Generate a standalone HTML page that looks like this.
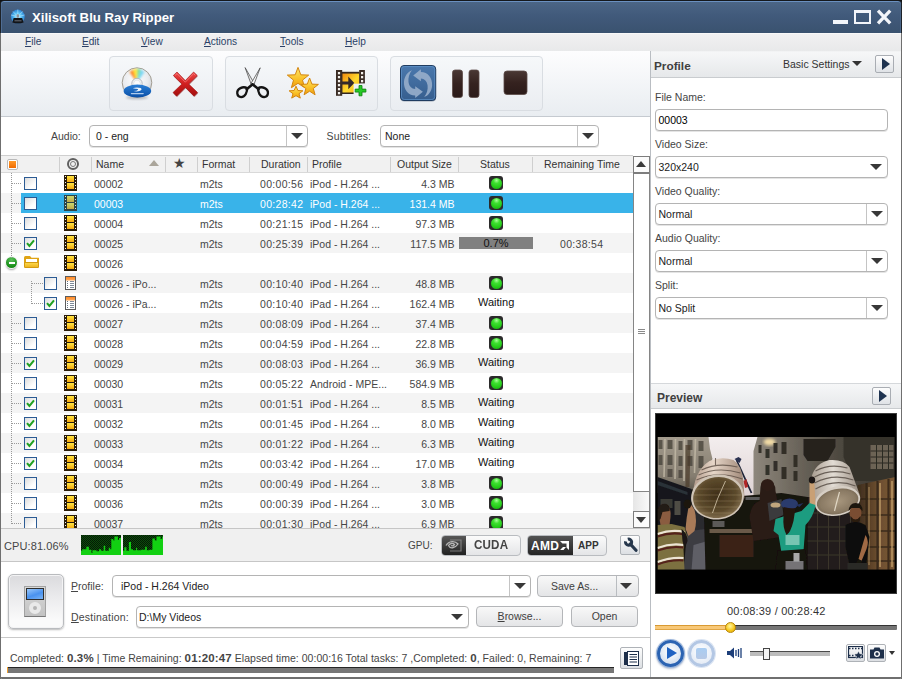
<!DOCTYPE html>
<html lang="en">
<head>
<meta charset="utf-8">
<title>Xilisoft Blu Ray Ripper</title>
<style>
*{box-sizing:border-box;margin:0;padding:0}
html,body{width:902px;height:679px;overflow:hidden;background:#fff}
body{font-family:"Liberation Sans","DejaVu Sans",sans-serif;font-size:10.5px;color:#3a3a3a;}
#win{position:relative;width:902px;height:679px;overflow:hidden;background:#fff}
.abs{position:absolute}
u{text-decoration:underline}
/* title */
#title{position:absolute;left:0;top:0;width:902px;height:33px;background:linear-gradient(#4c6686 0%,#415a7b 45%,#3a526f 100%);border-top:1px solid #15181c;border-left:1px solid #1d2228;border-right:1px solid #1d2228;border-radius:4px 4px 0 0;box-shadow:inset 0 1px 0 #6a90c0,inset 1px 0 0 #4f6d94,inset -1px 0 0 #4a6587}
#title .t{position:absolute;left:31px;top:8.8px;color:#fff;font-weight:bold;font-size:13.2px;letter-spacing:0px;white-space:nowrap}
/* menu */
#menu{position:absolute;left:0;top:33px;width:902px;height:18px;background:linear-gradient(#f1f1f2,#e8e9ea);border-left:1px solid #6f6f6f;border-right:1px solid #6f6f6f;box-shadow:inset 0 1px 0 #f8f8f8}
#menu span{position:absolute;top:3px;font-size:10.1px;color:#2b3f66;white-space:nowrap}
/* toolbar */
#tb{position:absolute;left:1px;top:51px;width:649px;height:66px;background:linear-gradient(#fdfdfe,#e9edf1);border-bottom:1px solid #c5cad0}
.grp{position:absolute;top:5px;height:55px;border:1px solid #d9dde2;border-radius:4px;background:linear-gradient(#f6f8fa,#eaedf1)}
/* audio row */
.lbl{position:absolute;white-space:nowrap;color:#454545}
.combo{position:absolute;height:22px;border:1px solid #b4b4b4;border-radius:4px;background:#fff;box-shadow:0 1px 0 #e4e4e4}
.combo .v{position:absolute;left:7px;top:4px;white-space:nowrap;color:#222}
.combo .a{position:absolute;right:0;top:0;width:21px;height:20px;border-left:1px solid #c4c4c4}
.combo .a:after,.tri:after{content:"";position:absolute;left:4px;top:7px;border:6px solid transparent;border-top:6.5px solid #383838;border-bottom:0}
.combo.ns .a{border-left:0}
/* table */
#th{position:absolute;left:1px;top:155px;width:632px;height:18px;background:#f1f1f1;border-top:1px solid #cfcfcf;border-bottom:1px solid #d9d9d9}
#th span{position:absolute;top:2px;white-space:nowrap;color:#333}
#th i{position:absolute;top:1px;width:1px;height:15px;background:#cfcfcf}
#list{position:absolute;left:1px;top:173px;width:632px;height:355px;overflow:hidden;background:#fff}
.row{position:absolute;left:0;width:632px;height:20px}
.row.alt{background:#f4f4f4}
.selbg{position:absolute;left:20px;top:0;width:612px;height:20px;background:#39b3e9}
.row.sel .c{color:#fff}
.c{position:absolute;top:4.5px;white-space:nowrap;color:#464646}
.nm{left:93px}.fm{left:199px}.du{left:259px;letter-spacing:.3px}.pr{left:309px}.sz{right:178.5px}.st{left:477px;top:3.2px;color:#111;font-size:11px}.rm{left:559px;letter-spacing:.3px}
.cb{position:absolute;top:4px;width:13px;height:13px;border:1px solid #2b5b94;background:linear-gradient(135deg,#dcdcdc,#fff 70%)}
.cb svg{position:absolute;left:-1px;top:-1px}
.hdot{position:absolute;top:10px;height:1px;background-image:linear-gradient(90deg,#999 50%,transparent 50%);background-size:2px 1px}
.vdot{position:absolute;width:1px;background-image:linear-gradient(#999 50%,transparent 50%);background-size:1px 2px}
.film{position:absolute;left:63px;top:2px;width:13px;height:15.5px;background:#2a1c08}
.film:before,.film:after{content:"";position:absolute;top:1px;width:1.4px;height:14px;background:repeating-linear-gradient(#f4f4f4 0 1.4px,transparent 1.4px 3px)}
.film:before{left:.9px}.film:after{left:10.8px}
.film i{position:absolute;left:3px;width:7px;height:6.2px;background:linear-gradient(#ffe640,#f5a60e)}
.film i:nth-child(1){top:1px}.film i:nth-child(2){top:8.2px}
.row.sel .film{opacity:.72}
.doc{position:absolute;left:64px;top:3px;width:11px;height:14px;border:1px solid #5c5c5c;background:linear-gradient(#ff8822,#ffac60) 0 0/100% 3.5px no-repeat,#fff}
.doc i{position:absolute;left:3.5px;top:4.3px;width:4.5px;height:7px;background:repeating-linear-gradient(#7f8b98 0 1px,transparent 1px 2px)}
.doc:before{content:"";position:absolute;left:1.3px;top:4.3px;width:1px;height:7px;background:repeating-linear-gradient(#66727f 0 1px,transparent 1px 2px)}
.led{position:absolute;left:488px;top:3px;width:14px;height:14px;border-radius:3px;background:#2b2b2b}
.led i{position:absolute;left:1.5px;top:1.5px;width:11px;height:11px;border-radius:5.5px;background:radial-gradient(circle at 50% 22%,#a8ff98 0,#3fe030 30%,#25cc1a 65%,#1aa012)}
.prog{position:absolute;left:458px;top:4px;width:74px;height:12px;background:#808080;color:#111;text-align:center;line-height:12.5px;font-size:11px}
.minus{position:absolute;left:5px;top:4px;width:11px;height:11px;border-radius:6px;background:radial-gradient(circle at 50% 25%,#58c058,#148a14 75%);box-shadow:0 0 0 1px #f4f4f4,0 2px 2px rgba(0,0,0,.35)}
.minus i{position:absolute;left:2.5px;top:4.5px;width:6px;height:2px;background:#fff}
.folder{position:absolute;left:23px;top:3px;width:15px;height:12px}
.folder:before{content:"";position:absolute;left:0;top:0;width:15px;height:12px;background:#dfa416;border-radius:1.5px;clip-path:polygon(0 0,40% 0,50% 15%,100% 15%,100% 100%,0 100%)}
.folder b{position:absolute;left:2px;top:3px;width:11px;height:3px;background:#fff}
.folder:after{content:"";position:absolute;left:0;top:5.5px;width:13px;height:4.5px;background:linear-gradient(#fbd648,#efb620);border:1px solid #d39a10;border-radius:0 0 1.5px 1.5px}
/* scrollbar */
#sb{position:absolute;left:633px;top:156px;width:17px;height:372px;background:#fff}
/* right panel */
#rp{position:absolute;left:650px;top:51px;width:251px;height:628px;background:#fff;border-left:1px solid #b9bdc2}
.ph{position:absolute;left:0;width:250px;height:26px;background:linear-gradient(#f6f7f8,#e6e8ea);border-bottom:1px solid #c9cccf;border-top:1px solid #d5d8db}
.ph b{position:absolute;left:3px;top:6.5px;font-size:12px;color:#404040}
.pbtn{position:absolute;width:19px;height:18px;border:1px solid #a9adb3;border-radius:2px;background:linear-gradient(#fdfdfd,#dfe2e6)}
.pbtn:after{content:"";position:absolute;left:6px;top:1.5px;border:6.5px solid transparent;border-left:8px solid #1f3350;border-right:0}
.btn{position:absolute;height:22px;border:1px solid #b4b6b9;border-radius:4px;background:linear-gradient(#f8f8f8,#e4e5e7);text-align:center;line-height:20px;color:#404040}
#stat b{font-size:11.5px;letter-spacing:.15px}
</style>
</head>
<body>
<div id="win">
<!-- title bar -->
<div class="abs" style="left:0;top:0;width:902px;height:6px;background:#111"></div>
<div id="title">
 <svg class="abs" style="left:8px;top:7px" width="18" height="18" viewBox="9 8 18 18"><defs><radialGradient id="dg" cx="0.5" cy="0.5" r="0.55"><stop offset="0" stop-color="#cfeeff"/><stop offset="0.45" stop-color="#5cc4f4"/><stop offset="1" stop-color="#2277cc"/></radialGradient></defs><circle cx="17.800" cy="16.600" r="7" fill="url(#dg)"/><path d="M17.800 16.600 L13 11.500 M17.800 16.600 L17.800 9.600 M17.800 16.600 L22.600 11.500 M17.800 16.600 L11 15 M17.800 16.600 L24.600 15" stroke="#bfe9ff" stroke-width=".8" opacity=".7"/><rect x="16.600" y="14.300" width="2.400" height="3.500" rx=".8" fill="#8d949c"/><path d="M13.600 18 H22.200 L23.600 22.400 Q18 24.600 12.400 22.400 Z" fill="#121418"/><path d="M14.500 20.800 H21.500" stroke="#7d858e" stroke-width=".8"/></svg>
 <span class="t">Xilisoft Blu Ray Ripper</span>
 <div class="abs" style="left:832px;top:19px;width:15px;height:4px;background:#f2f5fa"></div>
 <div class="abs" style="left:853px;top:9px;width:16.5px;height:14px;border:2px solid #f2f5fa;border-top-width:3px"></div>
 <svg class="abs" style="left:874px;top:8px" width="18" height="16" viewBox="0 0 18 16"><path d="M3 1.700 L15.200 14.300 M15.200 1.700 L3 14.300" stroke="#f2f5fa" stroke-width="3.300"/></svg>
</div>
<!-- menu -->
<div id="menu">
 <span style="left:24px"><u>F</u>ile</span>
 <span style="left:81px"><u>E</u>dit</span>
 <span style="left:140px"><u>V</u>iew</span>
 <span style="left:203px"><u>A</u>ctions</span>
 <span style="left:279px"><u>T</u>ools</span>
 <span style="left:344px"><u>H</u>elp</span>
</div>
<!-- toolbar -->
<div id="tb">
 <div class="grp" style="left:108px;width:104px"></div>
 <div class="grp" style="left:224px;width:153px"></div>
 <div class="grp" style="left:389px;width:153px"></div>
 <svg class="abs" style="left:0;top:0" width="649" height="66" viewBox="1 51 649 66">
  <defs>
   <radialGradient id="discg" cx="0.45" cy="0.4" r="0.7"><stop offset="0" stop-color="#ffffff"/><stop offset="0.6" stop-color="#e9ebee"/><stop offset="1" stop-color="#c3c7cc"/></radialGradient>
   <linearGradient id="blug" x1="0" y1="0" x2="0" y2="1"><stop offset="0" stop-color="#2a7fd6"/><stop offset="1" stop-color="#0b4fa6"/></linearGradient>
   <linearGradient id="redg" x1="0" y1="0" x2="0" y2="1"><stop offset="0" stop-color="#ef4a4a"/><stop offset="0.5" stop-color="#cf1f1f"/><stop offset="1" stop-color="#a30f0f"/></linearGradient>
   <linearGradient id="starg" x1="0" y1="0" x2="0" y2="1"><stop offset="0" stop-color="#ffe76a"/><stop offset="0.6" stop-color="#f9bf25"/><stop offset="1" stop-color="#ee9c12"/></linearGradient>
   <linearGradient id="filmg" x1="0" y1="0" x2="1" y2="1"><stop offset="0" stop-color="#f08a10"/><stop offset="0.55" stop-color="#ffd92e"/><stop offset="1" stop-color="#f6b21a"/></linearGradient>
   <linearGradient id="cvtg" x1="0" y1="0" x2="0" y2="1"><stop offset="0" stop-color="#4a78ad"/><stop offset="1" stop-color="#365e8e"/></linearGradient>
   <linearGradient id="drkg" x1="0" y1="0" x2="0" y2="1"><stop offset="0" stop-color="#4a3834"/><stop offset="0.5" stop-color="#35221f"/><stop offset="1" stop-color="#2b1b19"/></linearGradient>
   <linearGradient id="bladeg" x1="0" y1="0" x2="1" y2="0"><stop offset="0" stop-color="#8a8a8a"/><stop offset="0.5" stop-color="#f4f4f4"/><stop offset="1" stop-color="#7a7a7a"/></linearGradient>
   <clipPath id="discclip"><circle cx="137" cy="82.5" r="14.6"/></clipPath>
   <filter id="b1" x="-20%" y="-20%" width="140%" height="140%"><feGaussianBlur stdDeviation="1"/></filter>
   <filter id="b05" x="-20%" y="-20%" width="140%" height="140%"><feGaussianBlur stdDeviation="0.5"/></filter>
  </defs>
  <!-- disc -->
  <ellipse cx="137" cy="97.500" rx="11" ry="1.800" fill="#000" opacity=".22" filter="url(#b1)"/>
  <circle cx="137" cy="82.600" r="14.800" fill="url(#discg)" stroke="#9a9488" stroke-width="0.900"/>
  <g clip-path="url(#discclip)">
   <g filter="url(#b1)">
    <path d="M137 83 L129.500 72 L133.500 69.500 Z" fill="#ff8a2c"/>
    <path d="M137 83 L133 69.500 L137.500 68.500 Z" fill="#ffe63a"/>
    <path d="M137 83 L137 68.500 L141 69.500 Z" fill="#8be08a"/>
    <path d="M137 83 L140.500 69.500 L144.500 72 Z" fill="#7cd8f4"/>
   </g>
   <circle cx="137" cy="83.500" r="5.200" fill="#f2f4f6" stroke="#b4b8be" stroke-width="1"/>
   <circle cx="137" cy="83.500" r="3.400" fill="#fafbfc" stroke="#d4d8dc" stroke-width="0.600"/>
  </g>
  <ellipse cx="137.400" cy="91" rx="13.800" ry="6.500" fill="url(#blug)"/>
  <path d="M132.800 88.300 q4 -1.500 7.800 -0.200 q2.200 1.300 -0.500 2.700 q-3 1.100 -6.600 0.300 q3.800 -0.200 4.600 -1.400 q0.300 -1.100 -2.300 -1 z" fill="#fff" opacity=".92"/>
  <rect x="130.800" y="92.900" width="13" height="1.300" rx=".6" fill="#d5e6fa" opacity=".8"/>
  <!-- red X -->
  <g>
   <path d="M173.300 75.500 L177 72 L185.300 80.600 L193.600 72 L197.300 75.500 L188.700 84 L197.600 92.600 L194 96.200 L185.300 87.400 L176.600 96.200 L173 92.600 L181.900 84 Z" fill="#7f0b0b" opacity=".45" transform="translate(0.500,0.900)" filter="url(#b05)"/>
   <path d="M173.300 75.500 L177 72 L185.300 80.600 L193.600 72 L197.300 75.500 L188.700 84 L197.600 92.600 L194 96.200 L185.300 87.400 L176.600 96.200 L173 92.600 L181.900 84 Z" fill="url(#redg)" stroke="#a01414" stroke-width=".6" stroke-linejoin="round"/>
   <path d="M175.200 75.300 L177 73.600 L185.300 82.200 L193.600 73.600 L195.300 75.300" fill="none" stroke="#ff9a9a" stroke-width="1" opacity=".55"/>
  </g>
  <!-- scissors -->
  <g>
   <path d="M245.100 67.600 L254.300 83.600 L251.600 85.400 Z" fill="#ececec" stroke="#3c3c3c" stroke-width=".7" stroke-linejoin="round"/>
   <path d="M260.200 67.800 L253.600 85.400 L250.900 83.600 Z" fill="#f6f6f6" stroke="#3c3c3c" stroke-width=".7" stroke-linejoin="round"/>
   <path d="M252.800 84.400 L258.600 89.200" stroke="#141414" stroke-width="2.600" stroke-linecap="round"/>
   <path d="M252.400 84.400 L246.600 89.200" stroke="#141414" stroke-width="2.600" stroke-linecap="round"/>
   <path d="M258 88.300 C262 85.800 268.600 88.500 267.900 93.600 C267.200 98.200 261.500 98 259.400 94 C258.500 92.200 258 90 258 88.300 Z" fill="none" stroke="#141414" stroke-width="2.300"/>
   <path d="M247.200 88.300 C243.200 85.800 236.600 88.500 237.300 93.600 C238 98.200 243.700 98 245.800 94 C246.700 92.200 247.200 90 247.200 88.300 Z" fill="none" stroke="#141414" stroke-width="2.300"/>
  </g>
  <!-- stars -->
  <g stroke="#d4860f" stroke-width="1" stroke-linejoin="round" fill="url(#starg)">
   <path d="M296.0 86.2 L297.9 90.5 L302.9 90.8 L299.0 93.7 L300.3 98.1 L296.0 95.7 L291.7 98.1 L293.0 93.7 L289.1 90.8 L294.1 90.5Z"/>
   <path d="M298.0 67.4 L300.8 74.8 L308.7 75.1 L302.5 80.1 L304.6 87.7 L298.0 83.3 L291.4 87.7 L293.5 80.1 L287.3 75.1 L295.2 74.8Z"/>
   <path d="M309.6 78.0 L311.9 84.1 L318.4 84.4 L313.3 88.5 L315.1 94.8 L309.6 91.2 L304.1 94.8 L305.9 88.5 L300.8 84.4 L307.3 84.1Z"/>
  </g>
  <!-- film add -->
  <g>
   <rect x="342" y="71.800" width="17.500" height="22.200" fill="#33261f"/>
   <rect x="342.300" y="73.600" width="17" height="18.900" fill="url(#filmg)"/>
   <rect x="336" y="70" width="6.200" height="25.800" fill="#3a2c24"/>
   <rect x="359.200" y="70" width="5.700" height="13.600" fill="#3a2c24"/>
   <g fill="#f4f1ec"><rect x="337.900" y="72.0" width="2.200" height="2.300"/><rect x="337.900" y="76.0" width="2.200" height="2.300"/><rect x="337.900" y="80.0" width="2.200" height="2.300"/><rect x="337.900" y="84.0" width="2.200" height="2.300"/><rect x="337.900" y="88.0" width="2.200" height="2.300"/><rect x="337.900" y="92.0" width="2.200" height="2.300"/><rect x="361" y="72.0" width="2.200" height="2.300"/><rect x="361" y="76.0" width="2.200" height="2.300"/><rect x="361" y="80.0" width="2.200" height="2.300"/></g>
   <path d="M342 81.600 H348.300 V76.600 L354.300 82.900 L348.300 89.200 V84.500 H342 Z" fill="#33282a"/>
   <rect x="353.600" y="83.700" width="13" height="12.500" fill="#edf0f4"/>
   <path d="M359 85.500 h3 v3.600 h3.900 v3 h-3.900 v3.700 h-3 v-3.700 h-3.800 v-3 h3.800z" fill="#27c927" stroke="#0b7d0b" stroke-width=".8"/>
  </g>
  <!-- convert -->
  <rect x="400.300" y="65.800" width="35.800" height="35.600" rx="4" fill="#1a2f4c" opacity=".35" filter="url(#b05)"/>
  <rect x="400.500" y="65.500" width="35.200" height="35" rx="3.500" fill="url(#cvtg)" stroke="#203c60" stroke-width="1"/>
  <rect x="401.500" y="66.500" width="33.200" height="33" rx="2.800" fill="none" stroke="#5f93c9" stroke-width=".9" opacity=".8"/>
  <g fill="#93abc9" opacity=".95">
   <path d="M413.200 75.600 L420.900 69.300 V72 C428 72 432.500 78 432.100 85.500 C431.800 91 428.500 95.500 424.200 97.100 C427 93.500 428 89.500 427.600 85.500 C427 81 424.500 78.800 420.900 78.500 V81.200 Z"/>
   <path d="M413.200 75.600 L420.900 69.300 V72 C428 72 432.500 78 432.100 85.500 C431.800 91 428.500 95.500 424.200 97.100 C427 93.500 428 89.500 427.600 85.500 C427 81 424.500 78.800 420.900 78.500 V81.200 Z" transform="rotate(180 418.050 83.700)"/>
  </g>
  <!-- pause -->
  <rect x="452.5" y="70" width="10" height="27.500" rx="2.5" fill="url(#drkg)" stroke="#5c4a46" stroke-width="0.8"/>
  <rect x="469" y="70" width="10" height="27.500" rx="2.5" fill="url(#drkg)" stroke="#5c4a46" stroke-width="0.8"/>
  <!-- stop -->
  <rect x="504" y="71" width="23" height="23.500" rx="3" fill="url(#drkg)" stroke="#5c4a46" stroke-width="0.8"/>
 </svg>

</div>
<!-- left border -->
<div class="abs" style="left:0;top:33px;width:1px;height:646px;background:#6f6f6f"></div>
<div class="abs" style="left:901px;top:33px;width:1px;height:646px;background:#6f6f6f"></div>

<!-- audio row -->
<span class="lbl" style="left:51px;top:130px">Audio:</span>
<div class="combo" style="left:89px;top:125px;width:219px"><span class="v" style="left:6px">0 - eng</span><div class="a"></div></div>
<span class="lbl" style="left:326.5px;top:130px;letter-spacing:.15px">Subtitles:</span>
<div class="combo" style="left:380px;top:125px;width:219px"><span class="v" style="left:4px">None</span><div class="a"></div></div>
<!-- table header -->
<div id="th">
 <div class="abs" style="left:6px;top:3px;width:11px;height:11px;border:1px solid #b9b9b9;border-radius:2px;background:#fff"><div class="abs" style="left:1px;top:1px;width:7px;height:7px;background:linear-gradient(#ff9a2a,#f06a00)"></div></div>
 <i style="left:58px"></i><i style="left:90px"></i><i style="left:164px"></i><i style="left:196px"></i><i style="left:248px"></i><i style="left:306px"></i><i style="left:389px"></i><i style="left:457px"></i><i style="left:531px"></i>
 <div class="abs" style="left:66px;top:2px;width:12px;height:12px;border-radius:6px;border:2px solid #606060"><div class="abs" style="left:1px;top:1px;width:6px;height:6px;border-radius:3px;border:1.5px solid #777"></div></div>
 <span style="left:95px">Name</span>
 <div class="abs" style="left:148px;top:4px;border:5px solid transparent;border-bottom:6px solid #aaa59a;border-top:0"></div>
 <span style="left:172px;top:-1px;font-size:14px;color:#444">&#9733;</span>
 <span style="left:201px">Format</span>
 <span style="left:260px">Duration</span>
 <span style="left:311px">Profile</span>
 <span style="left:396px">Output Size</span>
 <span style="left:479px">Status</span>
 <span style="left:543px">Remaining Time</span>
</div>
<!-- list -->
<div id="list">
<div class="row" style="top:0px"><div class="hdot" style="left:11px;width:10px"></div><div class="cb" style="left:23px"></div><div class="film"><i></i><i></i></div><span class="c nm">00002</span><span class="c fm">m2ts</span><span class="c du">00:00:56</span><span class="c pr">iPod - H.264 ...</span><span class="c sz">4.3 MB</span><div class="led"><i></i></div></div>
<div class="row alt sel" style="top:20px"><div class="selbg"></div><div class="hdot" style="left:11px;width:10px"></div><div class="cb" style="left:23px"></div><div class="film"><i></i><i></i></div><span class="c nm">00003</span><span class="c fm">m2ts</span><span class="c du">00:28:42</span><span class="c pr">iPod - H.264 ...</span><span class="c sz">131.4 MB</span><div class="led"><i></i></div></div>
<div class="row" style="top:40px"><div class="hdot" style="left:11px;width:10px"></div><div class="cb" style="left:23px"></div><div class="film"><i></i><i></i></div><span class="c nm">00004</span><span class="c fm">m2ts</span><span class="c du">00:21:15</span><span class="c pr">iPod - H.264 ...</span><span class="c sz">97.3 MB</span><div class="led"><i></i></div></div>
<div class="row alt" style="top:60px"><div class="hdot" style="left:11px;width:10px"></div><div class="cb on" style="left:23px"><svg width="13" height="13" viewBox="0 0 13 13"><path d="M3 6.2 L5.4 9 L10 3.4" fill="none" stroke="#21a121" stroke-width="2"/></svg></div><div class="film"><i></i><i></i></div><span class="c nm">00025</span><span class="c fm">m2ts</span><span class="c du">00:25:39</span><span class="c pr">iPod - H.264 ...</span><span class="c sz">117.5 MB</span><div class="prog">0.7%</div><span class="c rm">00:38:54</span></div>
<div class="row" style="top:80px"><div class="minus"><i></i></div><div class="folder"><b></b></div><div class="film"><i></i><i></i></div><span class="c nm">00026</span></div>
<div class="row alt" style="top:100px"><div class="hdot" style="left:31px;width:14px"></div><div class="cb" style="left:43px"></div><div class="doc"><i></i></div><span class="c nm">00026 - iPo...</span><span class="c fm">m2ts</span><span class="c du">00:10:40</span><span class="c pr">iPod - H.264 ...</span><span class="c sz">48.8 MB</span><div class="led"><i></i></div></div>
<div class="row" style="top:120px"><div class="hdot" style="left:31px;width:14px"></div><div class="cb on" style="left:43px"><svg width="13" height="13" viewBox="0 0 13 13"><path d="M3 6.2 L5.4 9 L10 3.4" fill="none" stroke="#21a121" stroke-width="2"/></svg></div><div class="doc"><i></i></div><span class="c nm">00026 - iPa...</span><span class="c fm">m2ts</span><span class="c du">00:10:40</span><span class="c pr">iPad - H.264 ...</span><span class="c sz">162.4 MB</span><span class="c st">Waiting</span></div>
<div class="row alt" style="top:140px"><div class="hdot" style="left:11px;width:10px"></div><div class="cb" style="left:23px"></div><div class="film"><i></i><i></i></div><span class="c nm">00027</span><span class="c fm">m2ts</span><span class="c du">00:08:09</span><span class="c pr">iPod - H.264 ...</span><span class="c sz">37.4 MB</span><div class="led"><i></i></div></div>
<div class="row" style="top:160px"><div class="hdot" style="left:11px;width:10px"></div><div class="cb" style="left:23px"></div><div class="film"><i></i><i></i></div><span class="c nm">00028</span><span class="c fm">m2ts</span><span class="c du">00:04:59</span><span class="c pr">iPod - H.264 ...</span><span class="c sz">22.8 MB</span><div class="led"><i></i></div></div>
<div class="row alt" style="top:180px"><div class="hdot" style="left:11px;width:10px"></div><div class="cb on" style="left:23px"><svg width="13" height="13" viewBox="0 0 13 13"><path d="M3 6.2 L5.4 9 L10 3.4" fill="none" stroke="#21a121" stroke-width="2"/></svg></div><div class="film"><i></i><i></i></div><span class="c nm">00029</span><span class="c fm">m2ts</span><span class="c du">00:08:03</span><span class="c pr">iPod - H.264 ...</span><span class="c sz">36.9 MB</span><span class="c st">Waiting</span></div>
<div class="row" style="top:200px"><div class="hdot" style="left:11px;width:10px"></div><div class="cb" style="left:23px"></div><div class="film"><i></i><i></i></div><span class="c nm">00030</span><span class="c fm">m2ts</span><span class="c du">00:05:22</span><span class="c pr">Android - MPE...</span><span class="c sz">584.9 MB</span><div class="led"><i></i></div></div>
<div class="row alt" style="top:220px"><div class="hdot" style="left:11px;width:10px"></div><div class="cb on" style="left:23px"><svg width="13" height="13" viewBox="0 0 13 13"><path d="M3 6.2 L5.4 9 L10 3.4" fill="none" stroke="#21a121" stroke-width="2"/></svg></div><div class="film"><i></i><i></i></div><span class="c nm">00031</span><span class="c fm">m2ts</span><span class="c du">00:01:51</span><span class="c pr">iPod - H.264 ...</span><span class="c sz">8.5 MB</span><span class="c st">Waiting</span></div>
<div class="row" style="top:240px"><div class="hdot" style="left:11px;width:10px"></div><div class="cb on" style="left:23px"><svg width="13" height="13" viewBox="0 0 13 13"><path d="M3 6.2 L5.4 9 L10 3.4" fill="none" stroke="#21a121" stroke-width="2"/></svg></div><div class="film"><i></i><i></i></div><span class="c nm">00032</span><span class="c fm">m2ts</span><span class="c du">00:01:45</span><span class="c pr">iPod - H.264 ...</span><span class="c sz">8.0 MB</span><span class="c st">Waiting</span></div>
<div class="row alt" style="top:260px"><div class="hdot" style="left:11px;width:10px"></div><div class="cb on" style="left:23px"><svg width="13" height="13" viewBox="0 0 13 13"><path d="M3 6.2 L5.4 9 L10 3.4" fill="none" stroke="#21a121" stroke-width="2"/></svg></div><div class="film"><i></i><i></i></div><span class="c nm">00033</span><span class="c fm">m2ts</span><span class="c du">00:01:22</span><span class="c pr">iPod - H.264 ...</span><span class="c sz">6.3 MB</span><span class="c st">Waiting</span></div>
<div class="row" style="top:280px"><div class="hdot" style="left:11px;width:10px"></div><div class="cb on" style="left:23px"><svg width="13" height="13" viewBox="0 0 13 13"><path d="M3 6.2 L5.4 9 L10 3.4" fill="none" stroke="#21a121" stroke-width="2"/></svg></div><div class="film"><i></i><i></i></div><span class="c nm">00034</span><span class="c fm">m2ts</span><span class="c du">00:03:42</span><span class="c pr">iPod - H.264 ...</span><span class="c sz">17.0 MB</span><span class="c st">Waiting</span></div>
<div class="row alt" style="top:300px"><div class="hdot" style="left:11px;width:10px"></div><div class="cb" style="left:23px"></div><div class="film"><i></i><i></i></div><span class="c nm">00035</span><span class="c fm">m2ts</span><span class="c du">00:00:49</span><span class="c pr">iPod - H.264 ...</span><span class="c sz">3.8 MB</span><div class="led"><i></i></div></div>
<div class="row" style="top:320px"><div class="hdot" style="left:11px;width:10px"></div><div class="cb" style="left:23px"></div><div class="film"><i></i><i></i></div><span class="c nm">00036</span><span class="c fm">m2ts</span><span class="c du">00:00:39</span><span class="c pr">iPod - H.264 ...</span><span class="c sz">3.0 MB</span><div class="led"><i></i></div></div>
<div class="row alt" style="top:340px"><div class="hdot" style="left:11px;width:10px"></div><div class="cb" style="left:23px"></div><div class="film"><i></i><i></i></div><span class="c nm">00037</span><span class="c fm">m2ts</span><span class="c du">00:01:30</span><span class="c pr">iPod - H.264 ...</span><span class="c sz">6.9 MB</span><div class="led"><i></i></div></div>
 <div class="vdot" style="left:10px;top:0;height:86px"></div>
 <div class="vdot" style="left:10px;top:108px;height:243px"></div>
 <div class="vdot" style="left:30px;top:108px;height:23px"></div>
</div>
<!-- scrollbar -->
<div id="sb">
 <div class="abs" style="left:0;top:0;width:17px;height:18px;border:1px solid #7d7d7d;border-bottom-width:2px;background:#fbfbfb"></div>
 <div class="abs" style="left:3px;top:5px;border:5.5px solid transparent;border-bottom:6px solid #3a3a3a;border-top:0"></div>
 <div class="abs" style="left:0;top:18px;width:17px;height:318px;border-left:1px solid #858585;border-right:1px solid #858585;border-bottom:1px solid #858585;background:#fff"></div>
 <div class="abs" style="left:5px;top:173px;width:7px;height:1px;background:#8a8a8a;box-shadow:0 2px 0 #8a8a8a,0 4px 0 #8a8a8a"></div>
 <div class="abs" style="left:0;top:336px;width:17px;height:20px;border-right:1px solid #858585;background:linear-gradient(90deg,#e6e6e6,#f9f9f9)"></div>
 <div class="abs" style="left:0;top:355px;width:17px;height:17px;border:1px solid #7d7d7d;border-top-width:1px;background:#fbfbfb"></div>
 <div class="abs" style="left:3px;top:361px;border:5.5px solid transparent;border-top:6px solid #3a3a3a;border-bottom:0"></div>
</div>
<!-- cpu bar -->
<div class="abs" style="left:1px;top:528px;width:649px;height:34px;background:#f0f0f0;border-top:1px solid #c6c6c6;border-bottom:1px solid #c6c6c6"></div>
<span class="lbl" style="left:4px;top:539.5px;font-size:11px;letter-spacing:.1px">CPU:81.06%</span>
<svg class="abs" style="left:81px;top:535px" width="82" height="20" viewBox="0 0 82 20">
 <defs><pattern id="hatch" width="2" height="2" patternUnits="userSpaceOnUse"><rect width="2" height="2" fill="#0c4a0c"/><rect width="1" height="1" fill="#041a04"/><rect x="1" y="1" width="1" height="1" fill="#041a04"/></pattern></defs>
 <rect x="0" y="0" width="40" height="20" fill="#12d012"/><path d="M0 0 H40 V3.1 L40.0 3.1 L38.0 3.1 L38.0 5.1 L36.9 5.1 L36.9 1.5 L33.4 1.5 L33.4 5.6 L32.3 5.6 L32.3 4.1 L30.3 4.1 L30.3 14.3 L29.3 14.3 L29.3 12.8 L27.8 12.8 L27.8 15.8 L24.2 15.8 L24.2 10.7 L22.7 10.7 L22.7 15.8 L20.1 15.8 L20.1 14.3 L18.1 14.3 L18.1 16.3 L15.5 16.3 L15.5 15.3 L11.4 15.3 L11.4 17.9 L10.4 17.9 L10.4 14.8 L7.9 14.8 L7.9 11.7 L5.3 11.7 L5.3 14.3 L1.2 14.3 L1.2 15.8 L0.0 15.8 Z" fill="url(#hatch)"/>
 <g transform="translate(42,0)"><rect x="0" y="0" width="40" height="20" fill="#12d012"/><path d="M0 0 H40 V1.5 L39.9 1.5 L39.1 1.5 L39.1 4.1 L37.6 4.1 L37.6 1.5 L33.5 1.5 L33.5 5.6 L31.9 5.6 L31.9 3.6 L29.4 3.6 L29.4 14.8 L26.3 14.8 L26.3 15.3 L23.8 15.3 L23.8 11.7 L22.2 11.7 L22.2 14.8 L18.2 14.8 L18.2 15.3 L14.1 15.3 L14.1 12.8 L13.1 12.8 L13.1 15.3 L10.0 15.3 L10.0 14.3 L8.0 14.3 L8.0 7.1 L5.9 7.1 L5.9 15.8 L3.4 15.8 L3.4 12.2 L1.3 12.2 L1.3 15.8 L0.0 15.8 Z" fill="url(#hatch)"/></g>
</svg>
<span class="lbl" style="left:408px;top:539.5px;font-size:10px">GPU:</span>
<div class="abs" style="left:441px;top:535px;width:80px;height:21px;border:1px solid #b9bcc0;border-radius:4px;background:linear-gradient(#fbfbfb,#e4e5e7);overflow:hidden">
 <div class="abs" style="left:-1px;top:-1px;width:25px;height:21px;background:linear-gradient(#5a5a5a,#1e1e1e)"></div>
 <svg class="abs" style="left:3px;top:3px" width="17" height="13" viewBox="0 0 17 13"><path d="M1 6.500 C4 1.500 10 1.500 13 5 C10 9.500 5 10 3.500 6.500 C5 4 8 4 9.500 5.500 C8 7.500 6.500 7 6.200 6.200" fill="none" stroke="#b5b5b5" stroke-width="1.300"/><path d="M5 1 H16 V12 H5" fill="none" stroke="#9a9a9a" stroke-width="1.200" opacity=".7"/></svg>
 <span class="abs" style="left:32px;top:1px;font-weight:bold;font-size:13.500px;color:#444;letter-spacing:.2px;transform:scaleX(.86);transform-origin:0 0">CUDA</span>
</div>
<div class="abs" style="left:527px;top:535px;width:80px;height:21px;border:1px solid #b9bcc0;border-radius:4px;background:linear-gradient(#fbfbfb,#e4e5e7);overflow:hidden">
 <div class="abs" style="left:-1px;top:-1px;width:46px;height:21px;background:linear-gradient(#555,#222)"></div>
 <span class="abs" style="left:3px;top:2.500px;font-weight:bold;font-size:12px;color:#fff;letter-spacing:.3px">AMD</span>
 <svg class="abs" style="left:31px;top:4px" width="11" height="11" viewBox="0 0 11 11"><path d="M1 1 H10 V10 L7.500 7.500 V3.500 H3.500 Z M1 10 L4 7 H7 L4.500 10 Z" fill="#fff"/></svg>
 <span class="abs" style="left:50px;top:4px;font-weight:bold;font-size:10px;color:#333;letter-spacing:.1px">APP</span>
</div>
<div class="abs" style="left:620px;top:535px;width:20px;height:20px;border:1px solid #aeb2b7;border-radius:2px;background:linear-gradient(#fdfdfd,#dcdfe3)">
 <svg class="abs" style="left:0;top:0" width="17" height="18" viewBox="621 536 17 18"><path d="M627.800 539.200 A3.100 3.100 0 1 1 625.600 541.400" fill="none" stroke="#26374c" stroke-width="3"/><path d="M630.300 544 L636 550.300" stroke="#26374c" stroke-width="3.200" stroke-linecap="round"/></svg>
</div>

<!-- profile area -->
<div class="abs" style="left:8px;top:574px;width:56px;height:55px;border:1px solid #b9bbbe;border-radius:5px;background:linear-gradient(#dadadd,#ececee 45%,#fafafa 85%);box-shadow:0 1px 2px rgba(0,0,0,.28), inset 0 0 0 1px #f3f3f4">
 <div class="abs" style="left:15px;top:11px;width:22px;height:31px;background:linear-gradient(#d8d8d8,#c2c2c2);border:1px solid #a2a2a2;border-bottom-color:#777"></div>
 <div class="abs" style="left:17px;top:13px;width:18px;height:12px;background:linear-gradient(160deg,#9ac8fa,#4a92ee 55%,#7ab4f6);border:1px solid #2e2e2e"></div>
 <div class="abs" style="left:20px;top:27px;width:12px;height:12px;border-radius:6px;background:#b4b4b4;border:4px solid #e9e9e9"></div>
</div>
<span class="lbl" style="left:71px;top:580px"><u>P</u>rofile:</span>
<div class="combo" style="left:112px;top:575px;width:419px"><span class="v" style="left:8px">iPod - H.264 Video</span><div class="a"></div></div>
<div class="btn" style="left:537px;top:575px;width:102px"><span class="abs" style="left:13px;top:0">Save As...</span><div class="abs" style="left:78px;top:0;width:1px;height:20px;background:#b9bcc0"></div><div class="tri abs" style="left:78px;top:0;width:21px;height:20px"></div></div>
<span class="lbl" style="left:71px;top:611px;letter-spacing:.2px"><u>D</u>estination:</span>
<div class="combo ns" style="left:136px;top:606px;width:333px"><span class="v" style="left:2px">D:\My Videos</span><div class="a"></div></div>
<div class="btn" style="left:476px;top:606px;width:87px;height:21px;line-height:19px"><u>B</u>rowse...</div>
<div class="btn" style="left:571px;top:606px;width:67px;height:21px;line-height:19px">Open</div>
<div class="abs" style="left:1px;top:637px;width:649px;height:1px;background:#c9c9c9"></div>
<span class="lbl" id="stat" style="left:10px;top:652px;letter-spacing:.03px">Completed: <b>0.3%</b> | Time Remaining: <b>01:20:47</b> Elapsed time: 00:00:16 Total tasks: 7 ,Completed: <b>0</b>, Failed: 0, Remaining: 7</span>
<div class="abs" style="left:7px;top:667px;width:607px;height:6px;background:#777;border-top:1px solid #262626"></div>
<div class="abs" style="left:7px;top:667px;width:1px;height:6px;background:#f0a030"></div>
<div class="abs" style="left:620px;top:647px;width:23px;height:22px;border:1px solid #aeb2b7;border-radius:2px;background:linear-gradient(#fdfdfd,#dcdfe3)">
 <svg class="abs" style="left:3px;top:3px" width="15" height="15" viewBox="0 0 15 15"><rect x="3.500" y="0.500" width="11" height="14" fill="#fff" stroke="#1d2f4a"/><path d="M5.500 3.500 H13 M5.500 6 H13 M5.500 8.500 H13 M5.500 11 H13" stroke="#1d2f4a" stroke-width="1.200"/><rect x="0" y="1" width="3" height="13" fill="#1d2f4a"/></svg>
</div>

<!-- right panel -->
<div id="rp">
 <div class="ph" style="top:0;height:27px;border-top-color:#f2f3f4"><b style="font-size:11.8px;top:7px">Profile</b></div>
 <span class="lbl" style="left:132px;top:7px;color:#333">Basic Settings</span>
 <div class="abs" style="left:201px;top:10px;border:5px solid transparent;border-top:5.5px solid #333;border-bottom:0"></div>
 <div class="pbtn" style="left:224px;top:4px"></div>
 <span class="lbl" style="left:4px;top:40px">File Name:</span>
 <div class="combo ns" style="left:4px;top:58px;width:233px"><span class="v" style="left:2.5px;color:#000">00003</span></div>
 <span class="lbl" style="left:4px;top:87px">Video Size:</span>
 <div class="combo ns" style="left:4px;top:105px;width:233px"><span class="v" style="left:2.5px">320x240</span><div class="a"></div></div>
 <span class="lbl" style="left:4px;top:134px">Video Quality:</span>
 <div class="combo" style="left:4px;top:152px;width:233px"><span class="v" style="left:2.5px">Normal</span><div class="a"></div></div>
 <span class="lbl" style="left:4px;top:181px">Audio Quality:</span>
 <div class="combo" style="left:4px;top:199px;width:233px"><span class="v" style="left:2.5px">Normal</span><div class="a"></div></div>
 <span class="lbl" style="left:4px;top:228px">Split:</span>
 <div class="combo" style="left:4px;top:246px;width:233px"><span class="v" style="left:2.5px">No Split</span><div class="a"></div></div>
 <div class="ph" style="top:332px"><b style="left:6px">Preview</b></div>
 <div class="pbtn" style="left:221px;top:336px"></div>
 <svg class="abs" style="left:4px;top:362px" width="242" height="181" viewBox="-2.500 -24 242 181">
  <defs>
   <clipPath id="imgclip"><rect x="0" y="0" width="237" height="132.500"/></clipPath>
   <filter id="pb" x="-5%" y="-5%" width="110%" height="110%"><feGaussianBlur stdDeviation="0.7"/></filter>
   <filter id="pb2" x="-10%" y="-10%" width="120%" height="120%"><feGaussianBlur stdDeviation="1.6"/></filter>
   <linearGradient id="skyg" x1="0" y1="0" x2="0" y2="1"><stop offset="0" stop-color="#f3eeee"/><stop offset="1" stop-color="#dccfd0"/></linearGradient>
   <linearGradient id="lbg" x1="0" y1="0" x2="0" y2="1"><stop offset="0" stop-color="#a39b8d"/><stop offset="0.7" stop-color="#857d70"/><stop offset="1" stop-color="#5a544a"/></linearGradient>
   <linearGradient id="rbg" x1="0" y1="0" x2="1" y2="0"><stop offset="0" stop-color="#8e877c"/><stop offset="0.3" stop-color="#6c665c"/><stop offset="0.6" stop-color="#4e4940"/><stop offset="1" stop-color="#38342d"/></linearGradient>
   <radialGradient id="face1" cx="0.5" cy="0.45" r="0.6"><stop offset="0" stop-color="#3e2e18"/><stop offset="0.65" stop-color="#5c4a2c"/><stop offset="1" stop-color="#8a7656"/></radialGradient>
   <radialGradient id="face2" cx="0.5" cy="0.5" r="0.6"><stop offset="0" stop-color="#a8977e"/><stop offset="0.7" stop-color="#8a7a64"/><stop offset="1" stop-color="#6e5f4c"/></radialGradient>
   <linearGradient id="drum1" x1="0" y1="0" x2="1" y2="0"><stop offset="0" stop-color="#b09888"/><stop offset="0.4" stop-color="#e6d6c8"/><stop offset="1" stop-color="#a08878"/></linearGradient>
   <linearGradient id="drum2" x1="0" y1="0" x2="1" y2="0"><stop offset="0" stop-color="#a89c90"/><stop offset="0.45" stop-color="#e2dcd4"/><stop offset="1" stop-color="#9a8e82"/></linearGradient>
   <linearGradient id="wallg" x1="0" y1="0" x2="1" y2="0"><stop offset="0" stop-color="#3c2c1c"/><stop offset="0.5" stop-color="#6a4c2e"/><stop offset="1" stop-color="#7c5a36"/></linearGradient>
  </defs>
  <rect x="-2.500" y="-24" width="242" height="181" fill="#000"/>
  <rect x="-2" y="-23.500" width="241" height="180" fill="none" stroke="#3a3a3a" stroke-width="1"/>
  <g clip-path="url(#imgclip)">
  <rect x="0" y="0" width="238" height="133" fill="#15120f"/>
  <g filter="url(#pb)">
   <!-- sky -->
   <rect x="44" y="0" width="58" height="66" fill="url(#skyg)"/>
   <!-- left building -->
   <path d="M0 0 H51 L52.500 12 L55 22 L48 34 L40 52 L0 56 Z" fill="url(#lbg)"/>
   <g stroke="#c4bba8" stroke-width="1.600" opacity=".8"><path d="M7.500 2 L6.500 40"/><path d="M18 2 L17.500 42"/><path d="M27 2 L26.500 44"/><path d="M38 2 L37 36"/></g>
   <g fill="#4a453c" opacity=".8"><rect x="1" y="3" width="4" height="9"/><rect x="10" y="3" width="5" height="9"/><rect x="21" y="4" width="4" height="9"/><rect x="30" y="3" width="5" height="10"/><rect x="41" y="4" width="5" height="10"/><rect x="1" y="18" width="4" height="10"/><rect x="10" y="18" width="5" height="10"/><rect x="21" y="19" width="4" height="10"/><rect x="30" y="19" width="5" height="10"/><rect x="41" y="19" width="5" height="12"/><rect x="10" y="32" width="5" height="8"/><rect x="21" y="33" width="4" height="8"/></g>
   <path d="M28 8 L33 8 L32 50 L28 50 Z" fill="#4a3a2a" opacity=".7"/>
   <!-- left storefront -->
   <path d="M0 40 L34 52 L34 100 L0 100 Z" fill="#16181d"/>
   <path d="M0 44 L30 55 L30 58 L0 48 Z" fill="#2a3138"/>
   <rect x="3" y="62" width="12" height="9" fill="#3a3a36"/><rect x="17" y="64" width="6" height="14" fill="#6a6456" opacity=".7"/>
   <!-- right building (left part) -->
   <path d="M100 0 H238 V60 H96 V14 Z" fill="url(#rbg)"/>
   <ellipse cx="112" cy="5" rx="6" ry="3.500" fill="#f2dca6" filter="url(#pb2)"/>
   <g fill="#2b2822" opacity=".9"><rect x="101" y="8" width="3" height="8"/><rect x="108" y="12" width="4" height="9"/><rect x="116" y="6" width="4" height="10"/><rect x="124" y="5" width="5" height="12"/><rect x="136" y="18" width="4" height="12"/><rect x="124" y="30" width="5" height="12"/><rect x="136" y="34" width="4" height="10"/><rect x="108" y="28" width="4" height="10"/><rect x="116" y="24" width="4" height="10"/><rect x="147" y="4" width="6" height="14"/></g>
   <!-- fire escape -->
   <path d="M146 2 H178 V10 L170 24 H150 L146 18 Z" fill="#25231f"/>
   <path d="M186 0 H238 V44 H196 L186 20 Z" fill="#36322b"/>
   <rect x="213" y="8" width="23" height="24" fill="#6c6354"/>
   <g stroke="#2c2923" stroke-width="1"><path d="M213 14 H236 M213 20 H236 M213 26 H236 M219 8 V32 M225 8 V32 M231 8 V32"/></g>
   <!-- boarded wall right -->
   <path d="M200 48 L238 40 V133 H200 Z" fill="url(#wallg)"/>
   <g stroke="#2e2216" stroke-width="1.400" opacity=".8"><path d="M200 62 H238 M200 78 H238 M200 94 H238 M200 110 H238 M200 124 H238"/><path d="M209 46 V133 M220 44 V133 M231 42 V133" stroke-width="2.200"/></g>
   <g stroke="#d0ac74" stroke-width="1.600" opacity=".75"><path d="M222.500 46 V130"/><path d="M234.500 44 V130"/><path d="M211.500 50 V128" opacity=".6"/></g>
   <!-- mid lower wall -->
   <rect x="150" y="60" width="52" height="73" fill="#231f1a"/>
   <g stroke="#3e382e" stroke-width="1" opacity=".9"><path d="M150 76 H202 M150 90 H202 M150 104 H202 M150 118 H202 M160 62 V133 M171 62 V133 M182 62 V133 M193 62 V133"/></g>
   <!-- street -->
   <path d="M30 92 L50 88 L52 133 L26 133 Z" fill="#3c3c42"/><path d="M36 108 L50 104 L52 133 L34 133 Z" fill="#5e5e66"/>
   <path d="M34 60 L46 58 L48 92 L32 94 Z" fill="#2a2a2e"/>
   <!-- truck -->
   <path d="M46 62 L124 56 L150 60 V133 H48 Z" fill="#17120e"/>
   <path d="M52 92 H96 L98 96 H52 Z" fill="#6a5a48"/>
   <rect x="62" y="98" width="34" height="22" fill="#3a2418"/>
   <rect x="55" y="84" width="12" height="6" fill="#8a8a8a" opacity=".6"/>
   <rect x="88" y="60" width="30" height="3" fill="#5a5a5a"/>
   <path d="M79 23 L94 56" stroke="#1e2438" stroke-width="1.800"/>
   <path d="M77 22 l4 -2 l3 2 l-2 4 z" fill="#2a3050"/>
   <path d="M86 44 l3 -2 l1.500 8 l-3 1 z" fill="#b02828"/>
   <!-- seated person on truck -->
   <path d="M103 50 Q104 42 110 43 Q118 44 118 54 L121 70 L124 100 L96 104 L92 80 Q94 66 102 64 Z" fill="#2a1b15"/>
   <ellipse cx="110" cy="48" rx="6.500" ry="6" fill="#2e1c14"/>
   <path d="M110 66 L124 62 L126 78 L112 84 Z" fill="#3a3a3c"/>
   <ellipse cx="118" cy="68" rx="5" ry="2.600" fill="#d8b888" opacity=".85"/>
   <!-- left drum -->
   <path d="M35 62 Q36 34 52 24 Q64 19 76 23 Q84 28 86 44 L87 62 Q80 40 60 40 Q42 42 35 62 Z" fill="url(#drum1)"/>
   <g stroke="#5e5046" stroke-width="1.100" fill="none" opacity=".8"><path d="M44 33 Q60 25 80 30"/><path d="M41 38 Q60 29 83 36"/><path d="M39 43 Q60 33 85 42"/><path d="M58 21 V29"/></g>
   <ellipse cx="60" cy="60" rx="26.500" ry="22.500" transform="rotate(-8 60 60)" fill="#cfc4b6"/>
   <ellipse cx="60" cy="60.500" rx="24.500" ry="20.500" transform="rotate(-8 60 60)" fill="url(#face1)"/>
   <g stroke="#c8b48a" stroke-width=".5" opacity=".5"><path d="M38 52 H82 M36 58 H84 M36 64 H84 M38 70 H82 M42 76 H78"/></g>
   <path d="M68 44 L60 62 L55 76" stroke="#e8dcc0" stroke-width="1" opacity=".7" fill="none"/>
   <!-- left man -->
   <path d="M28 92 Q29 80 31 70 L34 68 L37 73 Q40 84 37 94 L31 99 Z" fill="#a87a58"/>
   <ellipse cx="30" cy="67" rx="4" ry="4.500" fill="#1a1410"/>
   <path d="M1 76 Q3 68 9 69 Q14 71 13 80 L12 88 L3 88 Z" fill="#8a5c40"/>
   <path d="M0 72 Q3 66 9 67 Q13 69 12 74 L5 75 L3 82 L0 84 Z" fill="#241a12"/>
   <path d="M0 88 L14 87 L27 90 L30 100 L26 112 L27 133 H0 Z" fill="#7c7040"/>
   <g stroke="#ece4d4" stroke-width="2.200" fill="none"><path d="M0 97 Q14 92 27 95"/><path d="M0 111 Q13 106 26 108"/><path d="M0 125 Q13 120 26 121"/></g>
   <g stroke="#55201a" stroke-width="2" fill="none"><path d="M0 99.500 Q14 94.500 27 97.500"/><path d="M0 113.500 Q13 108.500 26 110.500"/><path d="M0 127.500 Q13 122.500 26 123.500"/></g>
   <path d="M24 92 Q30 96 30 104 L27 112 L25 104 Z" fill="#1a1512"/>
   <!-- right drum -->
   <path d="M154 40 Q158 26 172 23 Q186 22 192 30 L202 57 Q196 48 180 50 Q164 52 158 66 Z" fill="url(#drum2)"/>
   <g stroke="#5a5048" stroke-width="1.100" fill="none" opacity=".85"><path d="M158 34 Q172 26 190 31"/><path d="M157 40 Q174 31 193 37"/><path d="M157 46 Q176 36 196 43"/><path d="M158 52 Q178 41 198 49"/></g>
   <ellipse cx="180" cy="64" rx="23" ry="14.500" transform="rotate(-12 180 64)" fill="#d6cec4"/>
   <ellipse cx="180" cy="64.500" rx="21" ry="12.500" transform="rotate(-12 180 64)" fill="url(#face2)"/>
   <path d="M182 55 L179 66 L177 74" stroke="#f0e8d8" stroke-width="1.200" opacity=".8" fill="none"/>
   <!-- teal person -->
   <path d="M152 44 Q156 43 157 48 L158 68 L152 72 Z" fill="#c9a074"/>
   <ellipse cx="154.500" cy="43" rx="3.200" ry="3.500" fill="#1a1612"/>
   <path d="M118 82 Q130 78 144 74 L152 66 L158 68 Q156 80 148 88 L146 114 L124 116 L121 98 L116 94 Z" fill="#1f9c80"/>
   <path d="M128 98 h14 v10 h-14 z" fill="#bfe8da" opacity=".55"/>
   <ellipse cx="132" cy="67" rx="8.500" ry="5.500" fill="#2b3a6c"/>
   <path d="M138 68 L146 66 L142 70 Z" fill="#24325c"/>
   <path d="M126 70 Q134 72 138 71 L136 84 Q133 96 129 98 Q125 90 126 80 Z" fill="#24160f"/>
   <path d="M120 114 L148 112 L150 133 H118 Z" fill="#15120f"/>
   <rect x="136" y="116" width="6" height="9" fill="#a8a8a8"/>
   <rect x="128" y="124" width="18" height="9" fill="#8c8c90" opacity=".8"/>
   <!-- right man -->
   <ellipse cx="198" cy="76" rx="6" ry="7" fill="#7a4e32"/>
   <path d="M191 74 Q192 66 198 66 Q205 66 205 74 L202 71 L194 71 Z" fill="#1c140e"/>
   <path d="M193 79 Q198 86 203 79 L202 84 Q198 87 194 84 Z" fill="#2a1a10"/>
   <path d="M188 88 Q198 82 208 88 L212 100 L209 126 L192 128 L188 110 Z" fill="#0f0e0d"/>
   <path d="M208 98 Q212 104 209 112 L204 124 L201 122 L205 108 Z" fill="#a06a44"/>
   <path d="M200 122 l5 2 l-2 6 l-5 -2 z" fill="#15120f"/>
   <path d="M190 126 H210 V133 H190 Z" fill="#2a2a26"/>
  </g>
  </g>
 </svg>
 <span class="lbl" style="left:76px;top:553.5px;color:#333;font-size:11px;letter-spacing:.2px">00:08:39 / 00:28:42</span>
 <div class="abs" style="left:4px;top:574px;width:242px;height:5px;background:#757575;border-top:1px solid #333;border-radius:1px"></div>
 <div class="abs" style="left:4px;top:574px;width:76px;height:5px;background:#f8c877;border-top:1px solid #d99a32;border-bottom:1px solid #e0a544;border-radius:1px"></div>
 <div class="abs" style="left:74px;top:571px;width:10.500px;height:10.500px;border-radius:6px;background:radial-gradient(circle at 45% 35%,#fff6a0,#f5c518 60%,#d9a008);border:1px solid #b8860b"></div>
 <!-- play -->
 <div class="abs" style="left:6px;top:589px;width:27px;height:27px;border-radius:14px;background:radial-gradient(circle at 50% 40%,#fff 0,#e4ecf6 50%,#c4d2e6 100%);border:3px solid #2b63b2;box-shadow:0 0 0 1px #9db7dc,0 1px 2px 1px rgba(40,70,120,.35)"></div>
 <div class="abs" style="left:16px;top:596px;border:6.500px solid transparent;border-left:10.500px solid #1f62c2;border-right:0"></div>
 <div class="abs" style="left:37px;top:589px;width:27px;height:27px;border-radius:14px;background:radial-gradient(circle at 50% 40%,#fff 0,#eef3fa 50%,#dbe4f1 100%);border:3px solid #b3c7e4;box-shadow:0 0 0 1px #dbe5f3"></div>
 <div class="abs" style="left:45px;top:597px;width:11px;height:11px;border-radius:2px;background:linear-gradient(#a9cdf2,#b7c9e6)"></div>
 <!-- volume -->
 <svg class="abs" style="left:75px;top:595px" width="17" height="14" viewBox="0 0 17 14"><path d="M1 5 H4 L8 1.500 V12.500 L4 9 H1 Z" fill="#1d3f7a"/><path d="M10 4 V10 M12.500 3 V11 M15 2 V12" stroke="#1d3f7a" stroke-width="1.300"/></svg>
 <div class="abs" style="left:99px;top:600px;width:80px;height:5px;background:#bcbcbc;border-top:1px solid #4a4a4a"></div>
 <div class="abs" style="left:112px;top:597px;width:7px;height:12px;background:#f4f4f4;border:1px solid #444"></div>
 <div class="abs" style="left:195px;top:593px;width:19px;height:18px;border:1px solid #aeb2b7;border-radius:2px;background:linear-gradient(#fdfdfd,#dcdfe3)">
  <svg class="abs" style="left:1px;top:1px" width="16" height="14" viewBox="0 0 16 14"><rect x="0.500" y="0.500" width="14" height="11" fill="none" stroke="#1d2f4a" stroke-width="1.200"/><path d="M1 2.500 H14 M1 9.500 H14" stroke="#1d2f4a" stroke-dasharray="1.500 1.500" stroke-width="1.500"/><path d="M10.500 5 l1.300 2.700 3 .4 -2.200 2.100 .5 3 -2.600 -1.400 -2.600 1.400 .5 -3 -2.200 -2.100 3 -.4z" fill="#1d2f4a" stroke="#fff" stroke-width=".5"/></svg>
 </div>
 <div class="abs" style="left:216px;top:593px;width:19px;height:18px;border:1px solid #aeb2b7;border-radius:2px;background:linear-gradient(#fdfdfd,#dcdfe3)">
  <svg class="abs" style="left:1px;top:1px" width="16" height="14" viewBox="0 0 16 14"><path d="M1 3.500 H4.500 L5.500 1.500 H10.500 L11.500 3.500 H15 V12.500 H1 Z" fill="#1d2f4a"/><circle cx="8" cy="8" r="3" fill="#fff"/><circle cx="8" cy="8" r="1.700" fill="#1d2f4a"/></svg>
 </div>
 <div class="abs" style="left:238px;top:600px;border:3.500px solid transparent;border-top:4px solid #333;border-bottom:0"></div>

</div>
<div class="abs" style="left:0;top:677px;width:902px;height:2px;background:#6f6f6f;border-radius:0 0 3px 3px"></div>
</div>
</body>
</html>
